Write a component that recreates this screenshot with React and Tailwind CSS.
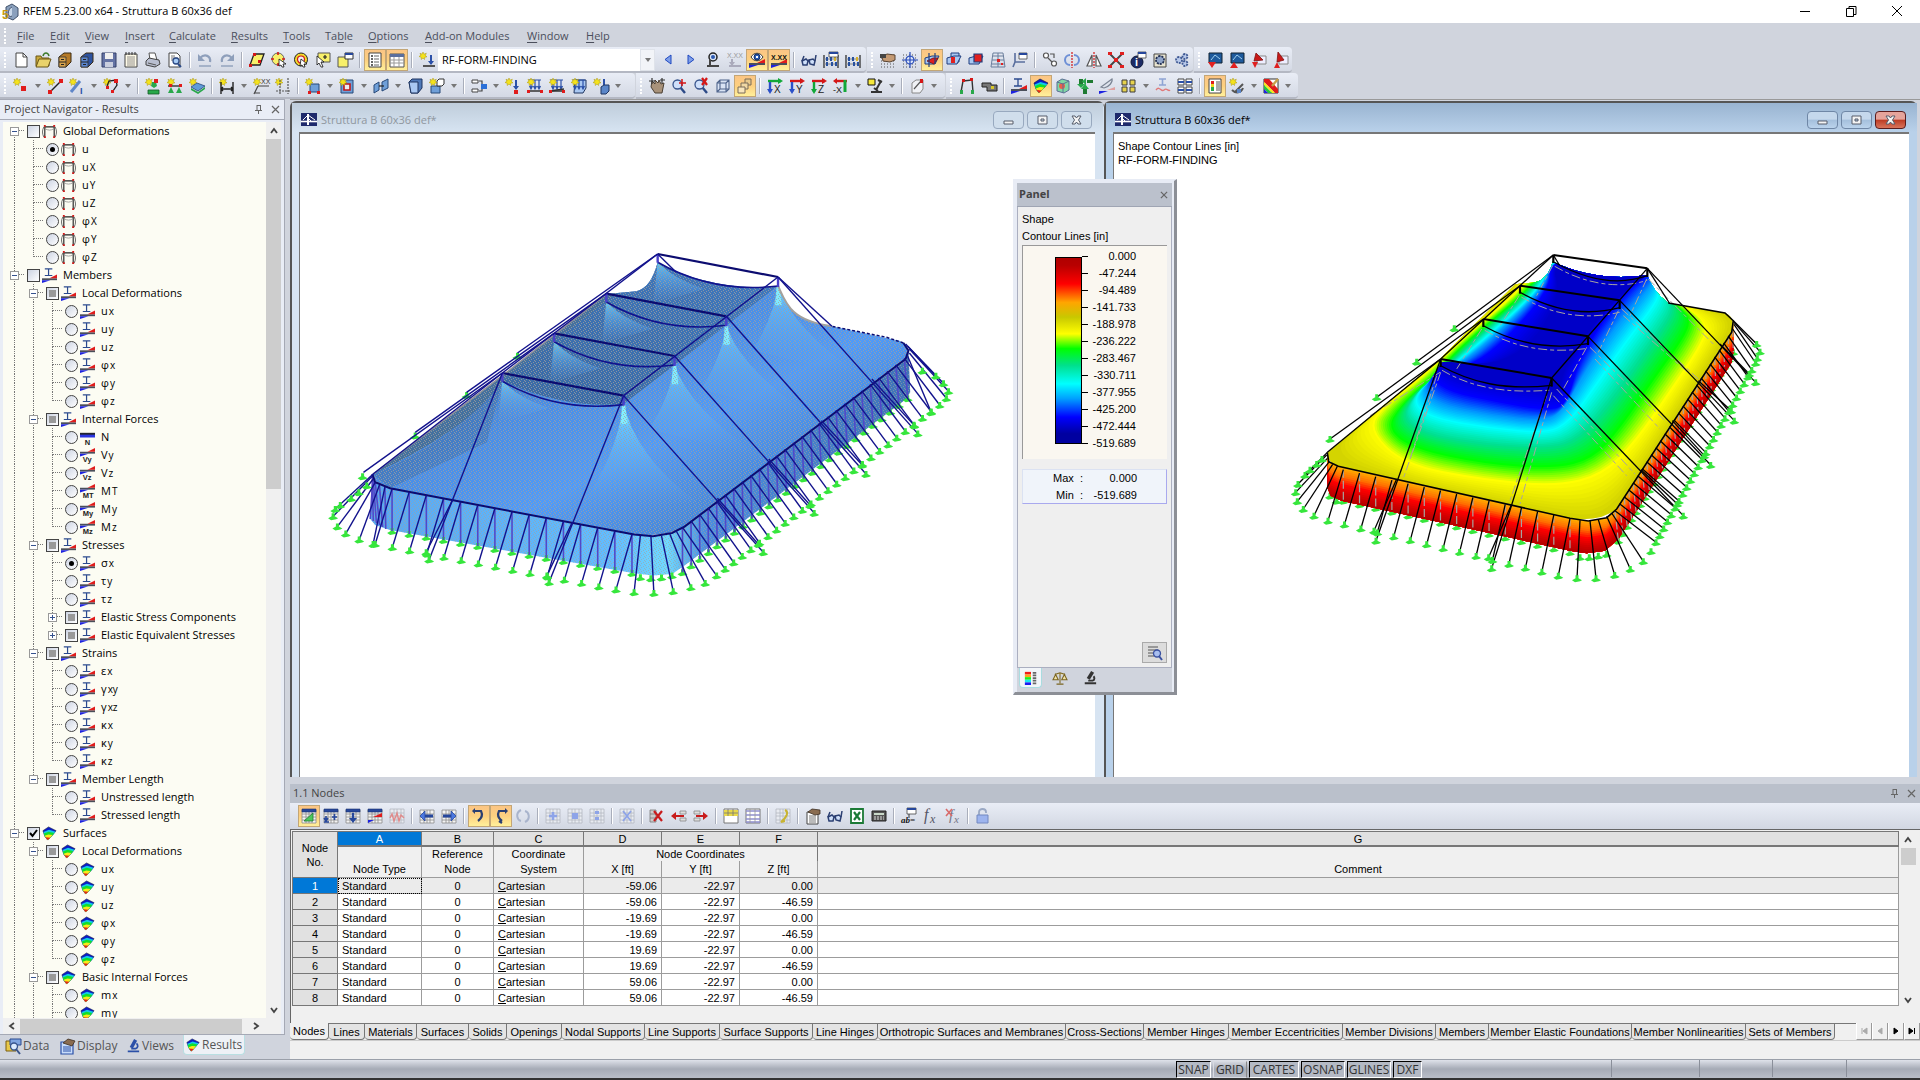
import { Fragment } from "react";

/* ---------- icons: [path, fill, stroke, stroke width] or { t, x, y, c, s } for letters ---------- */

const star = ["M4 0l1 2.2 2.3-1L6.400 3.500 8 4.800 5.800 5.200 5.500 7.500 4 6 2.200 7.500 2.200 5.200 0 4.500 1.800 3.300 1 1.200 3 2.200z", "#f4e21c", "#a89410", 0.5];
const dots = ["M1 3h14M1 6h14M1 9h14M1 12h14M1 15h14", "none", "#555", 1, "1 2"];
const grid = ["M1 2h14v13H1zM1 6h14M1 9h14M1 12h14M5 2v13M8 2v13M11 2v13", "#f4f4f4", "#8c8c8c", 0.8];
const gridHead = ["M1 1h14v3H1z", "#26479c", "#1c3370", 0.6];
const paleGrid = ["M1 1h14v14H1zM1 5h14M1 8h14M1 12h14M5 1v14M8 1v14M12 1v14", "#e8ebf1", "#b4b8c2", 0.8];
const lens = ["M9 9l5 6", "none", "#2c4a86", 2.4];
const lensGlass = ["M6.500 2a4.500 4.500 0 100 9 4.500 4.500 0 000-9z", "#cfe0fa", "#38548c", 1.3];
const beam = ["M3 1h8M3 8h8M7 1v7", "none", "#2b4a8f", 1.3];
const wedge = [["M0 11h16v2H0z", "#4a4f5a"], ["M0 13h9l-9 3z", "#1d22e0"], ["M16 11V7l-8 4z", "#e01c1c"]];
const results = [...wedge, beam];
const eye = [["M2 5c3-5 9-5 12 0-3 5-9 5-12 0z", "#fff", "#333", 1], ["M8 2a3 3 0 100 6 3 3 0 000-6z", "#2b59b0", "#132f68", 1], ["M7 4h2v2H7z", "#fff"]];
const surface = [
  ["M1 5l6-4 8 4-4 5-5 5-3-4z", "#0a1cc8", "#0c1238", 0.6],
  ["M1.500 6.500l6-2.500 7 2-3.500 4-5 5-3-4z", "#13c8e8"],
  ["M2 8l5-2 6 1.500-2 2.500-5 5-3-4z", "#12e02a"],
  ["M2.800 10.500l4-1.500 4.500.5-5 5.500z", "#f7ea1a"],
  ["M3.500 12l5.500.5-3 2.500z", "#e8231a"],
];
const cabinet = (a, b) => [["M2 5l5-4h7v9l-5 5H2z", b, "#3a2a12", 1], ["M2 5h7v10H2z", a, "#333", 0.8], ["M2 10h7M4 7.500h3M4 12.500h3", "none", "#222", 1]];
const flags = [["M1 2h5v5H1zM9 2h5v5H9zM1 9h5v5H1zM9 9h5v5H9z", "#e6d24c", "#3d3d3d", 1]];
const axis = (letter, a, b) => [["M1 3h13", "none", a, 2.4], ["M11 0l5 3-5 3z", a], ["M3 4v10", "none", b, 2.4], ["M0 11h6l-3 5z", b], { t: letter, x: 7, y: 15, c: "#222", s: 10 }];
const floorPlane = ["M1 6l7-2h7l-4 8H1z", "#a9c8f2", "#1f3d7e", 1];
const loadArrows = ["M2 2h12M4 2v8M8 2v8M12 2v8M2.500 8L4 11l1.500-3M6.500 8L8 11l1.500-3M10.500 8l1.500 3 1.500-3", "none", "#2b50a8", 1.2];
const supportBeam = [["M1 13h14", "none", "#333", 1.5], ["M0 12h3v3H0zM13 12h3v3h-3z", "#e01c1c"]];
const excel = [["M2 1h12v14H2z", "#fff", "#1b7a36", 1.8], ["M5 4l6 8M11 4l-6 8", "none", "#1b7a36", 2.2]];
const glasses = [["M1 9l4-2 2 2-1 4-4 0zM8 8l4-1 2 2-1 4-4-1z", "#cfe0fa", "#2b3f72", 1.5], ["M1 9L3 4M14 9l1-6M7 9l2-1", "none", "#2b3f72", 1.5]];
const hand = [["M2 5l5-3 8 1v5l-5 2-7-1z", "#c49a74", "#5a4432", 1], ["M0 2h6v4H0z", "#444"]];
const abacus = [["M1 3v13M15 3v13", "none", "#222", 1.2], ["M1 7h14M1 12h14", "none", "#888", 1], ["M3 5h2v4H3zM7 5h2v4H7zM3 10h2v4H3zM8 10h2v4H8zM12 10h2v4h-2z", "#27509e"], ["M11 5h2v4h-2z", "#d8b22a"]];

const icons = {
  app: [["M4 3l6-3 6 4v8l-5 4-7-3z", "#8aa0bd", "#40516b", 1], ["M10 3a3 5 20 100 9", "#c9d8ea", "#40516b", 1], { t: "5", x: 0, y: 15, c: "#c79a10", s: 12, b: 1 }],
  doc: [["M3 1h7l4 4v10H3z", "#fff", "#444", 1], ["M10 1v4h4", "none", "#444", 1]],
  open: [["M1 4h5l1 2h7v8H1z", "#c8a93c", "#6b5717", 1], ["M4 7h12l-3 8H1z", "#e9d26a", "#6b5717", 1], ["M8 4c1-4 5-4 6 0", "none", "#3c7a2a", 1.5]],
  cab1: cabinet("#d9a44c", "#b67a26"),
  cab2: cabinet("#5b86d0", "#2d53a0"),
  save: [["M1 1h14v14H1z", "#6473a4", "#35406b", 1], ["M4 1h8v6H4z", "#f0f0f0"], ["M4 10h8v5H4z", "#c9cede"]],
  notes: [["M2 2h12v13H2z", "#fffbe8", "#444", 1], ["M4 5h8M4 7h8M4 9h8M4 11h8M4 13h8", "none", "#777", 0.8], ["M3 0v3M6 0v3M9 0v3M12 0v3", "none", "#333", 1]],
  print: [["M4 1h6l2 7H5z", "#fff", "#555", 1], ["M1 9l3-3 10 2 1 4-5 3-9-2z", "#b9bfd0", "#444", 1], ["M3 11l8 2", "none", "#555", 1]],
  preview: [["M2 1h8l3 3v11H2z", "#fff", "#444", 1], ["M4 4h4M4 6h7M4 8h3", "none", "#777", 1], ["M9 6a3 3 0 100 6 3 3 0 000-6z", "#a8ccf5", "#2c4a86", 1.3], ["M11 12l3 3", "none", "#2c4a86", 2]],
  undo: [["M3 6c5-5 11-2 10 4", "none", "#8e9fbb", 2.2], ["M1 2v7h7z", "#8e9fbb"], ["M2 14h12", "none", "#8e9fbb", 1.4]],
  redo: [["M13 6C8 1 2 4 3 10", "none", "#8e9fbb", 2.2], ["M15 2v7H8z", "#8e9fbb"], ["M2 14h12", "none", "#8e9fbb", 1.4]],
  selPoly: [["M5 2h10l-4 11H1z", "#f8f06a", "#222", 1.3], ["M0 12h3v3H0zM4 1h3v3H4zM9 8h3v3H9z", "#d41717"]],
  selCircle: [["M7 1a6 6 0 100 12A6 6 0 007 1z", "#f8f06a", "#666", 1], ["M7 0v3M7 11v3M0 7h3M11 7h3", "none", "#d41717", 1.6], ["M8 7l7 5-3 0 1 3-2 0-1-2-2 1z", "#fff", "#111", 0.8]],
  selRing: [["M8 1a6.500 6.500 0 100 13A6.500 6.500 0 008 1z", "#f2da2a", "#222", 1], ["M8 4a3.500 3.500 0 100 7 3.500 3.500 0 000-7z", "#eef1f6", "#d41717", 1.2], ["M8 7l6 5-3 0 1 3-2 0-1-2-2 1z", "#fff", "#111", 0.8]],
  selMore: [["M3 1h12v9H3z", "#f8f06a", "#555", 1], ["M10 3v4M8 5h4", "none", "#222", 1.2], ["M2 4l7 6-3 0 2 5-2 0-2-4-2 2z", "#fff", "#111", 0.8]],
  selWin: [["M1 5h10v10H1z", "#f8f06a", "#555", 1], ["M8 1h8v6H8z", "#fff", "#333", 1], ["M8 1h8v2H8z", "#26479c"]],
  navTree: [["M2 1h12v14H2z", "#fff", "#444", 1], ["M4 4h2M4 7h2M4 10h2M4 13h2", "none", "#333", 1.6], ["M7 4h5M7 7h5M7 10h5M7 13h5", "none", "#666", 1]],
  navTable: [["M1 2h14v13H1z", "#fff", "#555", 1], ["M1 2h14v3H1z", "#5a6f9e"], ["M1 8h14M1 11h14M5 5v10M10 5v10", "none", "#999", 1]],
  newLoad: [star, ["M4 14h12", "none", "#555", 2], ["M12 3v9", "none", "#2b50a8", 2], ["M9 9h6l-3 4z", "#2b50a8"]],
  prev: [["M10 3v9L4 7.500z", "#7f9fe8", "#1f48c0", 1]],
  next: [["M5 3v9l6-4.500z", "#7f9fe8", "#1f48c0", 1]],
  eyeSet: [["M8 1a4 4 0 100 8 4 4 0 000-8z", "#dce6f6", "#222", 1.5], ["M8 3a2 2 0 100 4 2 2 0 000-4z", "#2b59b0"], ["M5 8v5M2 14h12", "none", "#444", 2]],
  valSet: [{ t: "X.XX", x: 0, y: 6, c: "#999", s: 7 }, ["M5 7v6M2 14h12", "none", "#aab", 2], ["M2 10h6l-3 4z", "#aab"]],
  eyeRes: [...wedge, ...eye],
  valRes: [...wedge, { t: "X.XX", x: 0, y: 8, c: "#111", s: 7, b: 1 }],
  glasses,
  abacusWin: [...abacus, ["M6 0h9v5H6z", "#fff", "#444", 0.8], ["M6 0h9v2H6z", "#26479c"]],
  abacus,
  gridHand: [dots, ...hand],
  gridSun: [dots, ["M8 4a4 4 0 100 8 4 4 0 000-8zM8 0v16M0 8h16", "#dce6fa", "#2549b8", 1.2]],
  planeXY: [floorPlane, ["M3 9l6-3h5l-4 6z", "#e02020", "#701010", 0.8], ["M5 1v14M11 1v11", "none", "#223f80", 1.2]],
  planeXZ: [["M5 1h8v9H5z", "#a9c8f2", "#1f3d7e", 1], floorPlane, ["M5 5h4v6H5z", "#e02020"]],
  planeYZ: [floorPlane, ["M6 2h8v8H6z", "#e02020", "#1f3d7e", 1.2]],
  mesh: [["M3 1h10l2 14H1zM2 8h12M8 1v14M2 12h13M3 4h11", "none", "#6b7f9c", 1], ["M7 7h3v3H7zM11 11h2v2h-2z", "#e02020"]],
  axes: [["M3 1v9h10M3 10l-2 5", "none", "#5a6f9e", 1.6], ["M7 1h8v6H7z", "#fff", "#444", 0.8], ["M7 1h8v2H7z", "#26479c"]],
  move: [["M4 1a2.500 2.500 0 100 5 2.500 2.500 0 000-5zM12 9a2.500 2.500 0 100 5 2.500 2.500 0 000-5z", "#fff", "#555", 1.2], ["M6 6l4 4M8 2h4v4", "none", "#555", 1.2]],
  rotate: [["M6 3a5 5 0 000 10M10 3a5 5 0 010 10", "none", "#6d8fd6", 2], ["M8 0v16", "none", "#d41717", 1.2, "2 1"]],
  mirror: [["M6 3v11H1zM10 3v11h5z", "#fff", "#555", 1.2], ["M8 0v16", "none", "#d41717", 1.2, "2 1"]],
  scaleX: [["M2 2l12 12M14 2L2 14", "none", "#444", 1.8], ["M0 0h4v3H0zM12 0h4v3h-4zM0 13h4v3H0zM12 13h4v3h-4zM6 6h4v4H6z", "#e02020"]],
  info: [["M7 4a6 6 0 100 12A6 6 0 007 4z", "#1d2c66", "#0c1638", 1], { t: "i", x: 5, y: 14, c: "#fff", s: 11, b: 1 }, ["M8 0h8v6H8z", "#fff", "#444", 0.8], ["M8 0h8v2H8z", "#26479c"]],
  gearBox: [["M2 2h12v13H2z", "#e8e4d0", "#444", 1], ["M8 4a4 4 0 100 8 4 4 0 000-8z", "#8fa4c8", "#222f52", 1.8, "2 1"]],
  gears: [["M5 5a3 3 0 100 6 3 3 0 000-6zM11 2a2.500 2.500 0 100 5 2.500 2.500 0 000-5zM11 9a2.500 2.500 0 100 5 2.500 2.500 0 000-5z", "#b8c9ea", "#405a94", 1.8, "2 1"]],
  screenDown: [["M2 1h13v10H2z", "#1e5a9c", "#123", 1], ["M4 8l4-5 5 4", "none", "#9fd0f0", 1], ["M1 10h8l-4 6z", "#e02020"]],
  screenUp: [["M2 1h13v10H2z", "#1e5a9c", "#123", 1], ["M4 8l4-5 5 4", "none", "#9fd0f0", 1], ["M1 16h8l-4-6z", "#e02020"]],
  pdfDown: [["M6 4h9v8H6z", "#eef", "#888", 1], ["M5 1l7 7-9 1z", "#c81818", "#801010", 0.8], ["M1 10h6l-3 6z", "#e02020"]],
  pdfUp: [["M6 4h9v8H6z", "#eef", "#888", 1], ["M5 0l6 8-7 2z", "#c81818", "#801010", 0.8], ["M1 16h6l-3-6z", "#e02020"]],

  node: [star, ["M8 8h5v5H8z", "#e01c1c"]],
  line: [star, ["M3 14L14 3", "none", "#222", 1.5], ["M1 12h4v4H1zM12 1h4v4h-4z", "#e01c1c"]],
  member: [star, ["M2 14L11 3", "none", "#5f86c8", 3], { t: "I", x: 11, y: 16, c: "#2b50a8", s: 9, b: 1 }],
  arc: [star, ["M4 8l2-5 7-1 1 5-4 6", "none", "#222", 1.3], ["M11 1h4v4h-4zM3 8h3v3H3zM8 12h3v3H8z", "#e01c1c"]],
  nodeSup: [star, ["M7 4h4l1 4-3 2-3-2z", "#28a84a"], ["M3 12h11v4H3z", "#28a84a", "#145c26", 0.8], ["M9 1h4v4H9z", "#e01c1c"]],
  lineSup: [star, ["M1 8h14", "none", "#333", 1.4], ["M2 6h3v3H2zM12 6h3v3h-3z", "#e01c1c"], ["M4 9l3 6H1zM12 9l3 6H9z", "#28a84a"]],
  surfSup: [star, ["M2 9l6-4 8 3-7 5z", "#5f9bd8", "#274878", 0.8], ["M2 10l7 4 7-5v2l-7 5-7-4z", "#28a84a"]],
  dim: [star, ["M2 4v12M14 4v12M2 11h12M4 9l-2 2 2 2M12 9l2 2-2 2", "none", "#222", 1.4]],
  comment: [star, { t: "XX", x: 8, y: 6, c: "#333", s: 7 }, ["M5 8h11M5 8l-4 8M1 15h6", "none", "#444", 1.2]],
  guide: [star, ["M5 2v14M13 0v16M1 13h15", "none", "#555", 1.2, "2 1"]],
  surf: [["M5 6h9v8H5z", "#6f9fd8", "#274878", 1], ["M3 13h3v3H3zM12 13h3v3h-3z", "#e01c1c"], star],
  hole: [["M2 2h12v13H2z", "#6f9fd8", "#274878", 1], ["M5 6h6v6H5z", "#e8ecf4", "#c01818", 1.6], star],
  cut: [["M1 7l5-3v8l-5 3zM9 4l6-3v9l-6 3z", "#6f9fd8", "#274878", 1], ["M6 8h5", "none", "#222", 1.2]],
  solid: [["M2 4l3-3h10v9l-4 5H4z", "#4f79b8", "#1f3560", 1], ["M2 4h9v11H4z", "#a9c8f2", "#1f3560", 1]],
  solidSet: [["M2 8h9v7H2z", "#6f9fd8", "#274878", 1], ["M8 3l2-2h5v5l-2 2H8z", "#fff", "#333", 1], star],
  link: [["M1 2h6v3H1zM1 11h6v3H1z", "#fff", "#444", 1], ["M8 3h3v10H8", "none", "#444", 1.2], ["M10 6h6v5h-6z", "#2b70d8"]],
  load1: [star, ["M11 2v9", "none", "#2b50a8", 2], ["M8 8h6l-3 4z", "#2b50a8"], ["M9 12h4v4H9z", "#e01c1c"]],
  load2: [loadArrows, ...supportBeam, star],
  load3: [loadArrows, ["M1 13L15 11", "none", "#333", 1.5], ...supportBeam, star],
  load4: [["M4 2h11v8l-3 5H3z", "#a9c8f2", "#1f3560", 1], loadArrows, star],
  load5: [star, ["M11 1v6", "none", "#2b50a8", 2], ["M8 9l3-2h5v6l-3 3H8z", "#5b86c8", "#1f3560", 1]],
  pan: [["M3 3l3 3V2l3 3 1-3 2 4 3-1-2 10H6L2 9z", "#a8927a", "#4b4034", 1], ["M0 3h6M3 0v6M13 0v5M11 2h5", "none", "#333", 1.2]],
  zoomWin: [lens, lensGlass, ["M11 1v7M8 5h7", "none", "#d41717", 1.5]],
  zoomX: [lens, lensGlass, ["M9 0l5 7M14 0L9 7", "none", "#d41717", 2.2]],
  box: [["M2 5l3-3h9v9l-3 3H2zM2 5h9v9M11 5l3-3M5 2v9h9M5 11l-3 3", "#d9e3f4", "#4f648c", 1.1]],
  boxes: [["M8 1h6v6H8z", "#e8c98c", "#7a6d58", 1], ["M4 5h7v6H4z", "#f0d8a4", "#7a6d58", 1], ["M1 9h7v6H1z", "#f8e6bc", "#7a6d58", 1]],
  axX: axis("X", "#12a838", "#2b50c8"),
  axY: axis("Y", "#d41717", "#2b50c8"),
  axZ: axis("Z", "#d41717", "#12a838"),
  axNX: [["M2 3h12", "none", "#d41717", 2.4], ["M4 0L0 3l4 3z", "#d41717"], ["M12 2v12", "none", "#12a838", 3], { t: "-X", x: 0, y: 15, c: "#222", s: 9 }],
  workspace: [["M1 1h7v6H1z", "#f6e83c", "#111", 1], ["M14 3l-5 9M11 2l4 2M4 14h11M7 10l4 3", "none", "#333", 2]],
  measure: [["M3 5l4-3h7v9l-3 4H3z", "#f0f2f6", "#888", 1], ["M5 11L12 3", "none", "#555", 1.2], ["M11 1h3v4h-3z", "#d41717"]],
  deform: [["M2 14L4 3l9-1 1 12", "none", "#333", 1.4], ["M1 12h3v4H1zM12 12h3v4h-3z", "#28a84a"], ["M3 1h3v3H3zM11 0h3v3h-3z", "#d41717"]],
  camera: [["M1 5h9v2h6v6H6V9H1z", "#777", "#222", 1], ["M10 8h3v3h-3z", "#d8c82a"]],
  results,
  surface,
  solidRes: [["M2 4l5-3 7 2v9l-5 3-7-2z", "#7fd8a4", "#5c6f94", 1], ["M7 5a3 3 0 100 6 3 3 0 000-6z", "#e8604c"], ["M2 4l6 2v9M8 6l6-3", "none", "#5c6f94", 1]],
  reactions: [["M2 1h4v7H2zM10 2h6v3h-6zM6 10h4v6H6z", "#1f7a32"], ["M0 6h8l-4 4zM9 0v7L5 3.500zM4 11h8L8 6z", "#28a84a"]],
  section: [["M13 1c1 3-3 8-8 9l-3-1z", "#dfe4ee", "#7b8494", 1.2], ["M0 13h9l-9 3z", "#1d22e0"], ["M8 12h8v-3z", "#e0a0a0"]],
  flags,
  moment: [["M4 1h7M4 7h7M7.500 1v6", "none", "#8ea4d4", 1.6], ["M1 12c4-5 5 3 8 0s4 2 6 0", "none", "#e07a7a", 1.4]],
  values: [["M1 1h6v6H1zM9 1h6v6H9zM1 9h6v6H1zM9 9h6v6H9z", "#fff", "#444", 1], ["M1 4h6M9 4h6M1 12h6M9 12h6", "none", "#2b50a8", 2]],
  panel: [["M2 1h12v14H2z", "#fff", "#444", 1], ["M4 3h3v3H4z", "#e01c1c"], ["M4 6h3v3H4z", "#f0d41c"], ["M4 9h3v4H4z", "#28a84a"], ["M9 4h4M9 6h4M9 8h4M9 10h4M9 12h4", "none", "#555", 1]],
  colors: [star, ["M6 14L14 6M3 12c4 4 9 3 11-2", "none", "#555", 2], ["M8 11h4v4H8z", "#5b86c8"]],
  rainbow: [["M1 1h14v14H1z", "#fff", "#333", 1], ["M1 1h5l9 10v4h-3L1 4z", "#e01c1c"], ["M1 4l11 11H9L1 7z", "#f7ea1a"], ["M1 7l8 8H5l-4-4z", "#28c83a"], ["M1 11l4 4H1z", "#1d22e0"], ["M9 8l6-7", "none", "#c8a04c", 2.4]],

  tblEdit: [grid, gridHead, ["M3 13h9V5z", "#4cc95a", "#1f7a32", 0.8]],
  tblIns: [grid, gridHead, ["M3 8v4M1 10l2 3 2-3M9 9h5M11.500 6v6M1 14h5", "none", "#26479c", 1.6]],
  tblDown: [grid, gridHead, ["M8 5v6", "none", "#26479c", 2.4], ["M4 10h8l-4 5z", "#26479c"]],
  tblRes: [grid, gridHead, ["M1 12h6l-6 3z", "#1d22e0"], ["M15 5v4H6z", "#e01c1c"]],
  tblWave: [paleGrid, ["M1 10l2-4 2 7 3-8 2 8 2-6 3 3", "none", "#e08a8a", 1.4]],
  tblLeft: [grid, ["M3 8h11", "none", "#26479c", 3], ["M6 3v10L1 8z", "#4c78e0", "#26479c", 0.8]],
  tblRight: [grid, ["M2 8h11", "none", "#26479c", 3], ["M10 3v10l5-5z", "#4c78e0", "#26479c", 0.8]],
  swap1: [["M4 3h6c2 4 1 7-3 10", "none", "#2b3f72", 2.2], ["M4 0v6L1 3z", "#2b3f72"]],
  swap2: [["M12 3H6c-2 4-1 7 3 10M6 13l3 2", "none", "#2b3f72", 2.2], ["M12 0v6l3-3z", "#2b3f72"]],
  cycle: [["M6 2C0 5 2 12 6 13M10 14c6-3 4-10 0-11", "none", "#a9b4cc", 2]],
  gPlus: [paleGrid, ["M8 4v8M4 8h8", "none", "#8ea4e8", 2.6]],
  gDot: [paleGrid, ["M5 5h6v6H5z", "#8ea4e8"]],
  gCol: [paleGrid, ["M6 3h4v3H6zM6 9h4v3H6z", "#8ea4e8"]],
  gX: [paleGrid, ["M4 3l8 10M12 3L4 13", "none", "#8ea4e8", 1.8]],
  delRow: [["M1 2h6v12H1zM1 6h6M1 10h6", "#ccc", "#777", 0.8], ["M5 3l8 10M13 3L5 13", "none", "#c81c1c", 2.2]],
  rowLeft: [["M9 3h6v3H9zM9 10h6v3H9z", "#ddd", "#888", 0.8], ["M3 8h10", "none", "#c81c1c", 2], ["M5 4v8L0 8z", "#c81c1c"]],
  rowRight: [["M1 3h6v3H1zM1 10h6v3H1z", "#ddd", "#888", 0.8], ["M3 8h9", "none", "#c81c1c", 2], ["M10 4v8l5-4z", "#c81c1c"]],
  yTable: [["M1 1h14v14H1z", "#fff", "#777", 1], ["M1 2h14v6H1z", "#e9d94a"], ["M1 5h14M5 1v7M10 1v7", "none", "#777", 0.8]],
  bTable: [["M1 1h14v14H1z", "#fff", "#777", 1], ["M1 3h14M1 7h14M1 11h14M1 14h14", "none", "#8f8fd0", 1.6], ["M5 1v14M10 1v14", "none", "#999", 0.8]],
  yGrid: [paleGrid, ["M10 2c4 2 2 7-4 12l4-1", "none", "#c8b432", 2]],
  props: [["M2 4h11v12H2z", "#fff", "#444", 1], ["M4 8h7M4 10h7M4 12h7M4 14h7", "none", "#777", 1], ["M3 4l4-3 8 1v4l-5 1z", "#8a6c50", "#3c2e22", 0.8]],
  excel,
  calc: [["M1 3h14v10H1z", "#555", "#222", 1], ["M3 5h10v2H3z", "#c8d8c8"], ["M3 9h10M3 11h10", "none", "#ddd", 1, "2 1"]],
  abWin: [["M6 0h9v6H6z", "#fff", "#444", 0.8], ["M6 0h9v2H6z", "#26479c"], ["M8 6v4", "none", "#333", 1], { t: "ab=", x: 0, y: 15, c: "#111", s: 9, b: 1, i: 1 }],
  fx: [{ t: "f", x: 1, y: 12, c: "#556", s: 16, i: 1 }, { t: "x", x: 7, y: 15, c: "#556", s: 12, i: 1 }],
  fxDel: [{ t: "f", x: 4, y: 12, c: "#778", s: 15, i: 1 }, { t: "x", x: 9, y: 15, c: "#778", s: 11, i: 1 }, ["M1 1l6 7M7 1L1 8", "none", "#d86a6a", 1.6]],
  lock: [["M4 7V4c0-4 7-4 7 0v1", "none", "#9aa8c4", 1.8], ["M2 7h11v8H2z", "#9db4ee", "#7388c0", 1]],

  frame: [["M3 15V3h10v12", "none", "#222", 1.2], ["M3 5c4 2 6 2 10 0", "none", "#888", 0.8], ["M2 3c-2 4-2 7 0 11M14 3c2 4 2 7 0 11", "none", "#555", 0.9], ["M2 1h2v2H2zM12 1h2v2h-2zM2 13h2v2H2zM12 13h2v2h-2z", "#d41717"]],
  N: [["M0 3h16v3H0z", "#22252e"], ["M0 5h16v3H0z", "#2a35e0"], { t: "N", x: 5, y: 16, c: "#222", s: 8, b: 1 }],
  data: [["M1 3h10v10H1z", "#e9c94a", "#7a5f10", 1], ["M5 1h11v6H5z", "#7fa4e0", "#2b4a8f", 1], ["M9 5a3.500 3.500 0 100 7 3.500 3.500 0 000-7z", "#dcebff", "#38548c", 1.3], ["M11 11l4 5", "none", "#38548c", 2]],
  display: [["M2 4h12v12H2z", "#c8dcfa", "#2b50a8", 1.2], ["M4 9h8M4 11h8M4 13h8", "none", "#2b50a8", 1], ["M4 5l5-4 7 2-3 5z", "#8a6c50", "#3c2e22", 0.8]],
  views: [["M11 1L6 10", "none", "#2b50a8", 4], ["M2 14h13M6 11h5c3-1 3-4 1-6", "none", "#2b50a8", 2]],
  legend: [["M1 1h7v3H1z", "#f01c1c"], ["M1 4h7v3H1z", "#ffa41c"], ["M1 7h7v3H1z", "#1cf01c"], ["M1 10h7v3H1z", "#1ce8f0"], ["M1 13h7v3H1z", "#1c1cf0"], ["M10 2h4M10 5h4M10 8h4M10 11h4M10 14h4", "none", "#666", 2]],
  scales: [["M8 2v12M4 15h8M2 4l6-2 6 2M3 4l-3 6h6zM13 4l-3 6h6z", "#f2e4a8", "#7a6420", 1.2]],
  scope: [["M11 1L6 9", "none", "#333", 4], ["M2 14h13M6 11h5c3-1 2-4 1-5", "none", "#333", 2.2]],
  pageZoom: [["M1 2h10M1 5h10M1 8h6M1 11h6", "none", "#555", 1.2], ["M10 5a3.500 3.500 0 100 7 3.500 3.500 0 000-7z", "#a9bff0", "#3a51a0", 1.3], ["M12 11l3 4", "none", "#3a51a0", 2]],
  bridge: [["M0 1h16v13H0z", "#1e2a6c"], ["M0 9.500h16", "none", "#fff", 1.6], ["M7 2v11", "none", "#fff", 2], ["M7 3L2 8M7 3l7 5M7 6l3 3", "none", "#fff", 1]],
};
["Vy", "Vz", "MT", "My", "Mz"].forEach((n) => {
  icons[n] = [["M0 4h16v2H0z", "#4a4f5a"], ["M0 6h9l-9 3z", "#1d22e0"], ["M16 4V0L8 4z", "#e01c1c"], { t: n, x: 3, y: 15, c: "#222", s: 8, b: 1 }];
});

function Icon({ name, className = "size-4" }) {
  return (
    <svg viewBox="0 0 16 16" className={`${className} shrink-0 overflow-visible`} aria-hidden="true">
      {icons[name].map((s, i) =>
        Array.isArray(s) ? (
          <path key={i} d={s[0]} fill={s[1]} stroke={s[2] || "none"} strokeWidth={s[3]} strokeDasharray={s[4]} />
        ) : (
          <text key={i} x={s.x} y={s.y} fill={s.c} fontSize={s.s} fontWeight={s.b ? 700 : 400} fontStyle={s.i ? "italic" : "normal"} fontFamily={s.i ? "Liberation Serif, serif" : "Liberation Sans, sans-serif"}>
            {s.t}
          </text>
        )
      )}
    </svg>
  );
}

/* ---------- toolbars: "|" separator, "v" drop-down arrow, "*" prefix = pressed ---------- */

const mainTools = "doc open cab1 cab2 save notes print preview | undo redo | selPoly selCircle selRing selMore selWin | *navTree *navTable | newLoad";
const caseTools = "prev next eyeSet valSet *eyeRes *valRes | glasses abacusWin abacus";
const planeTools = "gridHand gridSun *planeXY planeXZ planeYZ mesh axes | move rotate mirror scaleX info gearBox gears";
const exportTools = "screenDown screenUp pdfDown pdfUp";
const modelTools = "node v line member v arc v | nodeSup lineSup surfSup | dim v comment guide | surf v hole v cut v solid solidSet v | link v load1 load2 load3 load4 load5 v";
const viewTools = "pan zoomWin zoomX box *boxes | axX axY axZ axNX v workspace v | measure v";
const resultTools = "deform camera | results *surface solidRes reactions section flags v moment values | *panel colors v rainbow v";
const tableTools = "*tblEdit tblIns tblDown tblRes tblWave | tblLeft tblRight | *swap1 *swap2 cycle | gPlus gDot gCol | gX | delRow rowLeft rowRight | yTable bTable | yGrid | props glasses excel calc | abWin fx fxDel | lock";

function Tools({ items }) {
  return items.split(" ").map((it, i) => {
    if (it === "|") return <span key={i} className="mx-[3px] h-4 w-0.5 shrink-0 border-l border-[#a9aebb] bg-white" />;
    if (it === "v")
      return (
        <button key={i} type="button" aria-label="More" className="flex h-[22px] w-3 shrink-0 items-center justify-center">
          <span className="border-x-[3px] border-t-4 border-x-transparent border-t-[#777]" />
        </button>
      );
    const on = it[0] === "*";
    const name = on ? it.slice(1) : it;
    return (
      <button
        key={i}
        type="button"
        aria-label={name}
        className={`flex h-[22px] w-[22px] shrink-0 items-center justify-center border ${on ? "border-[#c3a676] bg-linear-to-b from-[#fbc585] via-[#fdd080] to-[#fff09a]" : "border-transparent"}`}
      >
        <Icon name={name} />
      </button>
    );
  });
}

function Bar({ className, children }) {
  return (
    <div className={`flex h-[26px] items-center rounded-r-sm border-b-2 border-[#b4b8c3] bg-linear-to-b from-[#e9edf6] to-[#d4d9e4] pt-0.5 ${className}`}>
      <span className="mx-1 h-4 w-0 shrink-0 border-l-2 border-dotted border-white" />
      {children}
    </div>
  );
}

/* ---------- navigator tree: [level, kind, icon, label, subscript] ---------- */

const radios = (lvl, icon, list, on) => list.map((l) => [lvl, l === on ? "radioOn" : "radio", icon, ...l.split("_")]);
const tree = [
  [0, "box", "frame", "Global Deformations"],
  ...radios(1, "frame", ["u", "u_X", "u_Y", "u_Z", "φ_X", "φ_Y", "φ_Z"], "u"),
  [0, "box", "results", "Members"],
  [1, "mixed", "results", "Local Deformations"],
  ...radios(2, "results", ["u_x", "u_y", "u_z", "φ_x", "φ_y", "φ_z"]),
  [1, "mixed", "results", "Internal Forces"],
  [2, "radio", "N", "N"],
  [2, "radio", "Vy", "V", "y"],
  [2, "radio", "Vz", "V", "z"],
  [2, "radio", "MT", "M", "T"],
  [2, "radio", "My", "M", "y"],
  [2, "radio", "Mz", "M", "z"],
  [1, "mixed", "results", "Stresses"],
  ...radios(2, "results", ["σ_x", "τ_y", "τ_z"], "σ_x"),
  [2, "closed", "results", "Elastic Stress Components"],
  [2, "closed", "results", "Elastic Equivalent Stresses"],
  [1, "mixed", "results", "Strains"],
  ...radios(2, "results", ["ε_x", "γ_xy", "γ_xz", "κ_x", "κ_y", "κ_z"]),
  [1, "mixed", "results", "Member Length"],
  ...radios(2, "results", ["Unstressed length", "Stressed length"]),
  [0, "checked", "surface", "Surfaces"],
  [1, "mixed", "surface", "Local Deformations"],
  ...radios(2, "surface", ["u_x", "u_y", "u_z", "φ_x", "φ_y", "φ_z"]),
  [1, "mixed", "surface", "Basic Internal Forces"],
  ...radios(2, "surface", ["m_x", "m_y"]),
];

// does the guide line of `level` carry on below row i?
const goesOn = (i, level) => {
  for (let k = i + 1; k < tree.length; k++) {
    if (tree[k][0] < level) return false;
    if (tree[k][0] === level) return true;
  }
  return level < 3;
};

function TreeRow({ index }) {
  const [level, kind, icon, label, sub] = tree[index];
  const isRadio = kind.startsWith("radio");
  return (
    <li className="flex h-[18px] items-center">
      {Array.from({ length: level + 1 }, (_, d) => (
        <span key={d} className="relative flex h-[18px] w-[19px] shrink-0 flex-col pl-[9px]">
          <span className={`h-[9px] ${d === level ? "border-b" : ""} ${d === level || goesOn(index, d) ? (d === 0 && index === 0 ? "" : "border-l") : ""} border-dotted border-[#777]`} />
          <span className={`h-[9px] ${goesOn(index, d) ? "border-l" : ""} border-dotted border-[#777]`} />
          {d === level && !isRadio && (
            <button type="button" aria-label={`Toggle ${label}`} className="absolute top-[5px] left-[5px] flex size-[9px] items-center justify-center border border-[#999] bg-white">
              <span className="absolute h-px w-[5px] bg-[#35528f]" />
              {kind === "closed" && <span className="absolute h-[5px] w-px bg-[#35528f]" />}
            </button>
          )}
        </span>
      ))}
      <label className="flex items-center whitespace-nowrap">
        {isRadio ? (
          <span className="relative ml-[3px] flex size-[13px] items-center justify-center">
            <input type="radio" name={`tree-${icon}-${level}`} defaultChecked={kind === "radioOn"} className="peer size-[13px] appearance-none rounded-full border border-[#444] bg-linear-to-br from-[#cdd4e3] to-white" />
            <span className="pointer-events-none absolute hidden size-[5px] rounded-full bg-black peer-checked:block" />
          </span>
        ) : (
          <span className="relative ml-[3px] flex size-[13px] items-center justify-center">
            <input type="checkbox" defaultChecked={kind === "checked"} className="peer size-[13px] appearance-none border border-[#444] bg-linear-to-br from-[#cdd4e3] to-white" />
            {(kind === "mixed" || kind === "closed") && <span className="pointer-events-none absolute size-[7px] bg-[#999]" />}
            <svg viewBox="0 0 9 9" className="pointer-events-none absolute hidden size-[9px] peer-checked:block">
              <path d="M1 4l2.500 3L8 1" fill="none" stroke="#000" strokeWidth="2" />
            </svg>
          </span>
        )}
        <Icon name={icon} className="ml-0.5 size-[15px]" />
        <span className="ml-[6px]">
          {label}
          {sub && <span className="ml-px text-[10px]">{sub}</span>}
        </span>
      </label>
    </li>
  );
}

function Chevron({ d }) {
  return (
    <svg viewBox="0 0 8 8" className="size-2">
      <path d={d} fill="none" stroke="#444" strokeWidth="1.800" />
    </svg>
  );
}
const up = "M1 6l3-4 3 4";
const down = "M1 2l3 4 3-4";
const left = "M6 1L2 4l4 3";
const right = "M2 1l4 3-4 3";

function PinClose() {
  return (
    <div className="flex items-center gap-2">
      <button type="button" aria-label="Pin">
        <svg viewBox="0 0 9 9" className="size-[9px]"><path d="M3 0v5M6.500 0v5M3 .5h3M1 5.500h7M4.500 6v3" fill="none" stroke="#666" /></svg>
      </button>
      <button type="button" aria-label="Close">
        <svg viewBox="0 0 9 9" className="size-[9px]"><path d="M1 1l7 7M8 1L1 8" fill="none" stroke="#666" strokeWidth="1.200" /></svg>
      </button>
    </div>
  );
}

function Navigator() {
  return (
    <aside className="flex w-[285px] shrink-0 flex-col">
      <div className="flex min-h-0 flex-1 flex-col border border-l-0 border-[#a5a9b5] bg-[#e9edf6]">
        <header className="flex h-5 shrink-0 items-center justify-between border-b border-[#a5a9b5] pr-1 pl-1 text-[#444]">
          <span>Project Navigator - Results</span>
          <PinClose />
        </header>
        <div className="mt-0.5 mr-[3px] ml-[3px] flex min-h-0 flex-1">
          <ul className="min-h-0 flex-1 overflow-hidden bg-[#fcfcf3] pl-0.5">
            {tree.map((_, i) => <TreeRow key={i} index={i} />)}
          </ul>
          <div className="flex w-[15px] flex-col items-center bg-[#f0f0f0]">
            <button type="button" aria-label="Scroll up" className="flex h-[17px] items-center"><Chevron d={up} /></button>
            <span className="h-[350px] w-full bg-[#cdcdcd]" />
            <button type="button" aria-label="Scroll down" className="mt-auto flex h-[17px] items-center"><Chevron d={down} /></button>
          </div>
        </div>
        <div className="mr-[3px] ml-[3px] flex h-4 shrink-0 items-center bg-[#f0f0f0]">
          <button type="button" aria-label="Scroll left" className="flex w-[17px] justify-center"><Chevron d={left} /></button>
          <span className="h-[15px] w-[222px] bg-[#cdcdcd]" />
          <button type="button" aria-label="Scroll right" className="ml-[10px]"><Chevron d={right} /></button>
        </div>
      </div>
      <nav className="flex h-6 shrink-0 items-start pl-[5px] text-[12px] leading-[22px] text-[#555]">
        <button type="button" className="flex w-[54px] items-center gap-0.5"><Icon name="data" />Data</button>
        <button type="button" className="flex w-[67px] items-center gap-0.5"><Icon name="display" />Display</button>
        <button type="button" className="flex w-[57px] items-center gap-0.5"><Icon name="views" className="size-[14px]" />Views</button>
        <button type="button" className="flex h-[20px] items-center gap-0.5 rounded-b border border-t-0 border-[#b9dfe2] bg-[#eef1f6] px-0.5"><Icon name="surface" className="size-[14px]" />Results</button>
      </nav>
    </aside>
  );
}

/* ---------- model drawing helpers ---------- */

const lerp = (a, b, t) => a + (b - a) * t;
const lerpPts = (p, q, t) => p.map(([x, y], i) => [lerp(x, q[i][0], t), lerp(y, q[i][1], t)]);
const poly = (pts, sx, sy) => pts.map(([x, y]) => `${(x * sx).toFixed(1)},${(y * sy).toFixed(1)}`).join(" ");
const mix = (a, b, t) => `rgb(${a.map((v, i) => Math.round(lerp(v, b[i], t))).join(",")})`;

// closed smooth curve through the middles of the sides
const smooth = (pts, s) => {
  const mid = (a, b) => `${(((a[0] + b[0]) / 2) * s).toFixed(1)} ${(((a[1] + b[1]) / 2) * s).toFixed(1)}`;
  const n = pts.length;
  let d = `M${mid(pts[n - 1], pts[0])}`;
  pts.forEach((p, i) => {
    d += `Q${(p[0] * s).toFixed(1)} ${(p[1] * s).toFixed(1)} ${mid(p, pts[(i + 1) % n])}`;
  });
  return d + "Z";
};

// n points spread evenly on a segment
const spread = (a, b, n) => Array.from({ length: n }, (_, i) => [lerp(a[0], b[0], i / (n - 1)), lerp(a[1], b[1], i / (n - 1))]);

function Supports({ pts, sx, sy }) {
  return pts.map(([x, y], i) => (
    <path key={i} transform={`translate(${(x * sx).toFixed(1)} ${(y * sy).toFixed(1)})`} d="M-1.500-3h3v3l3.500 2-2 1-5 1-3-2 3.500-2z" fill="#36e63c" />
  ));
}

function Lines({ list, sx, sy, color, w = 1.2, dash }) {
  return list.map(([a, b], i) => (
    <line key={i} x1={a[0] * sx} y1={a[1] * sy} x2={b[0] * sx} y2={b[1] * sy} stroke={color} strokeWidth={w} strokeDasharray={dash} />
  ));
}

const zip = (a, b) => a.map((p, i) => [p, b[i]]);

/* blue shaded membrane */
function MembraneModel() {
  const sx = 0.4209;
  const sy = 0.3333;
  const L = [[826, 75], [704, 194], [580, 313], [457, 432]];
  const R = [[1112, 144], [989, 262], [866, 381], [745, 500]];
  const S = (x, y) => `${(x * sx).toFixed(1)} ${(y * sy).toFixed(1)}`;
  const roof = `M${S(826, 100)}C${S(815, 150)} ${S(800, 180)} ${S(775, 187)}L${S(705, 195)}L${S(457, 440)}L${S(150, 735)}Q${S(150, 765)} ${S(190, 778)}L${S(770, 917)}Q${S(850, 925)} ${S(890, 893)}L${S(1415, 390)}Q${S(1430, 352)} ${S(1400, 335)}L${S(1240, 292)}C${S(1140, 275)} ${S(1130, 220)} ${S(1112, 170)}C${S(1060, 185)} ${S(920, 170)} ${S(826, 100)}Z`;
  const wallTop = [[148, 735], [155, 760], [190, 778], [770, 917], [815, 922], [860, 912], [890, 893], [1415, 390], [1422, 365]];
  const wallEnd = [[143, 870], [155, 888], [190, 903], [770, 1033], [815, 1040], [860, 1035], [890, 1010], [1415, 512], [1426, 490]];
  const wall = [...wallTop, ...[...wallEnd].reverse()];
  const frontTop = spread([195, 779], [765, 916], 15);
  const frontEnd = spread([155, 945], [727, 1082], 15);
  const frontFoot = spread([195, 906], [765, 1032], 15);
  const sideTop = spread([885, 895], [1412, 388], 27);
  const sideEnd = spread([966, 1040], [1496, 528], 27);
  const sideFoot = spread([885, 1030], [1420, 508], 27);
  const cornerTop = [[785, 919], [810, 921], [835, 920], [855, 915], [870, 906]];
  const cornerEnd = [[770, 1090], [817, 1092], [863, 1087], [905, 1075], [939, 1062]];
  const leftTop = [[150, 735], [148, 742], [150, 750], [155, 760], [165, 768], [178, 774]];
  const leftEnd = [[60, 840], [55, 862], [65, 893], [85, 914], [117, 932], [150, 945]];
  const farTop = [[1415, 345], [1420, 352], [1424, 360], [1424, 372], [1420, 382]];
  const farEnd = [[1487, 440], [1505, 463], [1517, 487], [1512, 508], [1476, 550]];
  const stays = [
    [R[3], [568, 1060]], [[623, 880], [563, 1040]], [L[3], [283, 992]], [[340, 810], [276, 970]],
    [R[3], [1077, 970]], [[968, 808], [1065, 945]], [R[2], [1198, 852]], [[1090, 690], [1188, 828]],
    [R[1], [1321, 735]], [[1215, 575], [1312, 708]], [R[0], [1444, 614]], [[1335, 450], [1436, 590]],
    [L[3], [127, 730]], [L[2], [250, 610]], [L[1], [372, 490]], [L[0], [493, 372]], [R[0], [1240, 292]], [L[0], [870, 130]], [L[3], [150, 735]],
  ];
  return (
    <svg viewBox="0 0 660 390" className="mt-[95px] ml-[10px] h-[390px] w-[660px] shrink-0">
      <defs>
        <pattern id="mesh" width="5" height="4" patternUnits="userSpaceOnUse">
          <path d="M0 0h1v1H0zM3 1h1v1H3zM1 2h1v1H1zM4 3h1v1H4z" fill="#a3a19d" />
        </pattern>
        <linearGradient id="roofFill" x1="0" y1="0" x2="1" y2="1">
          <stop offset=".22" stopColor="#406fa6" />
          <stop offset=".42" stopColor="#4a8ee6" />
          <stop offset=".6" stopColor="#519bf8" />
          <stop offset=".85" stopColor="#4280d0" />
        </linearGradient>
        <linearGradient id="wallFill" x1="0" x2="1">
          <stop offset="0" stopColor="#5aa8f0" />
          <stop offset=".45" stopColor="#62bcff" />
          <stop offset=".55" stopColor="#6fd8ff" />
          <stop offset=".62" stopColor="#4c8ee0" />
          <stop offset="1" stopColor="#3f74b8" />
        </linearGradient>
        <linearGradient id="topFill" x1="0" y1="1" x2="1" y2="0">
          <stop offset="0" stopColor="#3a6aa4" />
          <stop offset="1" stopColor="#4079c0" />
        </linearGradient>
        <linearGradient id="cone" x1="0" y1="0" x2="0" y2="1">
          <stop offset="0" stopColor="#86f4ff" />
          <stop offset=".25" stopColor="#66c4ff" stopOpacity=".9" />
          <stop offset="1" stopColor="#519bf8" stopOpacity="0" />
        </linearGradient>
        <clipPath id="roofClip"><path d={roof} /></clipPath>
      </defs>
      <polygon points={poly(wall, sx, sy)} fill="url(#wallFill)" />
      <polygon points={poly(wall, sx, sy)} fill="url(#mesh)" opacity=".6" />
      <path d={roof} fill="url(#roofFill)" />
      <g clipPath="url(#roofClip)">
        <path d={`M${S(826, 100)}L${S(1112, 170)}L${S(745, 525)}Q${S(600, 540)} ${S(457, 455)}Z`} fill="url(#topFill)" />
        <path d={`M${S(826, 100)}L${S(457, 455)}Q${S(380, 600)} ${S(150, 735)}L${S(457, 432)}L${S(705, 195)}Z`} fill="#44719f" />
        <path d={`M${S(457, 455)}Q${S(340, 640)} ${S(150, 735)}L${S(190, 778)}L${S(420, 640)}Z`} fill="#3f70ac" opacity=".5" />
        {R.slice(0, 3).map(([x, y], i) => (
          <path key={i} d={`M${S(x, y + 25)}Q${S(x + 30, y + 150)} ${S(x + 200, y + 300)}L${S(x - 60, y + 220)}Q${S(x - 10, y + 120)} ${S(x, y + 25)}`} fill="url(#cone)" opacity=".7" />
        ))}
        {L.map(([x, y], i) => <path key={i} d={`M${S(x, y + 22)}Q${S(x + 30, y + 70)} ${S(x + 110, y + 105)}L${S(x - 10, y + 150)}Z`} fill="url(#cone)" opacity=".7" />)}
        <path d={`M${S(745, 520)}Q${S(770, 680)} ${S(920, 820)}L${S(640, 840)}Q${S(730, 680)} ${S(745, 520)}`} fill="url(#cone)" />
        {R.map(([x, y], i) => <path key={i} d={`M${S(x - 4, y + 28)}L${S(x + 4, y + 28)}L${S(x + 9, y + 85)}L${S(x - 7, y + 85)}Z`} fill="#86f4ff" opacity=".8" />)}
      </g>
      <path d={roof} fill="url(#mesh)" opacity=".75" />
      <path d={`M${S(705, 195)}L${S(457, 440)}L${S(150, 735)}`} fill="none" stroke="#8f9198" strokeWidth="1.500" />
      <path d={`M${S(1112, 170)}C${S(1130, 220)} ${S(1140, 275)} ${S(1240, 292)}`} fill="none" stroke="#a3a19d" strokeWidth="2" />
      <Supports pts={[...frontFoot, ...sideFoot, [785, 1045], [810, 1048], [835, 1046], [860, 1040]]} sx={sx} sy={sy} />
      <Lines list={[...zip(frontTop, frontFoot), ...zip(sideTop, sideFoot), ...zip(leftTop, spread([143, 870], [180, 900], 6))]} sx={sx} sy={sy} color="#5148c8" w={1.6} />
      <polyline points={poly([[1410, 342], [1422, 365], [1415, 390], [890, 893], [860, 912], [815, 922], [770, 917], [190, 778], [155, 760], [148, 735]], sx, sy)} fill="none" stroke="#0c0c70" strokeWidth="2" />
      <polyline points={poly([[1410, 342], [1370, 325], [1240, 292]], sx, sy)} fill="none" stroke="#0c0c70" strokeWidth="1.500" strokeDasharray="3 2" />
      {L.map(([x, y], i) => (
        <Fragment key={i}>
          <path d={`M${S(x, y + 25)}C${S(x + 90, y + 90)} ${S(x + 190, y + 110)} ${S(R[i][0], R[i][1] + 27)}`} fill="none" stroke="#12128c" strokeWidth="1.600" />
          <Lines list={[[L[i], R[i]]]} sx={sx} sy={sy} color="#0c0c70" w={2.2} />
          <Lines list={[[L[i], [x, y + 26]], [R[i], [R[i][0], R[i][1] + 30]]]} sx={sx} sy={sy} color="#4a40c8" w={2.4} />
        </Fragment>
      ))}
      <Supports pts={[[250, 620], [372, 498], [493, 380]]} sx={sx} sy={sy} />
      <Lines list={[[L[0], L[3]], [R[0], R[3]], ...stays, ...zip(frontTop, frontEnd), ...zip(sideTop, sideEnd), ...zip(cornerTop, cornerEnd), ...zip(leftTop, leftEnd), ...zip(farTop, farEnd)]} sx={sx} sy={sy} color="#12128c" w={1.4} />
      <Supports pts={[...frontEnd, ...sideEnd, ...cornerEnd, ...leftEnd, ...farEnd, ...stays.slice(0, 12).map((s) => s[1]), [125, 742], [72, 828], [98, 808], [116, 790], [135, 770], [1455, 425]]} sx={sx} sy={sy} />
    </svg>
  );
}

/* contour plot */
const rings = [
  { c: [212, 212, 0], p: [[172, 690], [400, 760], [660, 815], [900, 868], [1010, 868], [1110, 730], [1230, 540], [1340, 370], [1400, 270], [1300, 235], [1190, 215], [980, 80], [840, 60], [735, 160], [560, 330], [400, 480], [250, 590]] },
  { c: [255, 255, 0], p: [[290, 600], [400, 710], [640, 755], [860, 775], [1000, 740], [1100, 640], [1210, 480], [1290, 360], [1320, 290], [1250, 232], [1180, 200], [980, 80], [840, 70], [765, 170], [570, 335], [450, 450], [340, 530]] },
  { c: [0, 255, 0], p: [[350, 600], [430, 660], [640, 705], [850, 720], [970, 690], [1050, 600], [1160, 440], [1240, 330], [1265, 270], [1215, 225], [1170, 190], [980, 80], [840, 80], [785, 175], [590, 335], [490, 440], [390, 530]] },
  { c: [0, 224, 144], p: [[395, 570], [470, 620], [650, 650], [840, 660], [930, 630], [1020, 530], [1110, 400], [1180, 300], [1215, 240], [1190, 205], [1160, 170], [980, 80], [840, 85], [800, 175], [605, 340], [490, 450], [430, 500]] },
  { c: [0, 255, 255], p: [[430, 530], [490, 570], [660, 600], [830, 615], [900, 580], [980, 470], [1070, 340], [1140, 250], [1170, 200], [1160, 170], [1150, 140], [980, 80], [840, 90], [815, 175], [625, 345], [500, 445], [450, 480]] },
  { c: [0, 150, 255], p: [[460, 490], [510, 530], [660, 560], [820, 580], [880, 545], [950, 420], [1040, 290], [1110, 210], [1145, 170], [1145, 145], [1140, 125], [980, 80], [840, 95], [825, 175], [650, 345], [530, 430], [480, 450]] },
  { c: [0, 0, 255], p: [[485, 450], [540, 490], [680, 520], [825, 545], [890, 530], [925, 400], [1010, 260], [1085, 175], [1130, 140], [1135, 120], [1130, 110], [980, 80], [840, 95], [840, 180], [690, 350], [580, 420], [500, 420]] },
  { c: [0, 0, 200], p: [[508, 405], [560, 440], [690, 470], [840, 480], [870, 490], [880, 420], [980, 270], [1060, 190], [1125, 145], [1130, 125], [1120, 115], [980, 100], [845, 100], [870, 190], [800, 330], [680, 410], [520, 395]] },
];

function ContourModel() {
  const s = 1 / 3;
  const k = { sx: s, sy: s };
  const L = [[850, 78], [750, 170], [640, 270], [512, 390]];
  const R = [[1132, 118], [1049, 214], [954, 322], [845, 447]];
  const S = (x, y) => `${(x * s).toFixed(1)} ${(y * s).toFixed(1)}`;
  const roof = `M${S(848, 98)}C${S(840, 135)} ${S(815, 165)} ${S(770, 162)}L${S(735, 166)}L${S(510, 390)}L${S(172, 670)}Q${S(170, 700)} ${S(205, 712)}L${S(900, 868)}Q${S(990, 880)} ${S(1040, 840)}L${S(1385, 310)}Q${S(1400, 265)} ${S(1365, 252)}L${S(1195, 222)}Q${S(1150, 190)} ${S(1132, 138)}Q${S(980, 160)} ${S(848, 98)}Z`;
  const top = [[172, 670], [176, 698], [205, 712], [900, 868], [955, 876], [1010, 866], [1040, 840], [1385, 310], [1390, 275]];
  const foot = [[172, 775], [182, 800], [215, 815], [900, 965], [950, 973], [1005, 965], [1045, 930], [1385, 400], [1390, 370]];
  const heat = [[255, 170, 0], [255, 110, 0], [255, 0, 0], [210, 0, 0], [175, 0, 0]];
  const frontTop = spread([220, 722], [900, 868], 15);
  const frontEnd = spread([174, 875], [865, 1040], 15);
  const frontFoot = spread([220, 815], [900, 970], 15);
  const sideTop = spread([1035, 845], [1388, 300], 27);
  const sideEnd = spread([1158, 940], [1457, 402], 27);
  const sideFoot = spread([1045, 935], [1390, 370], 27);
  const cornerTop = [[930, 874], [960, 875], [985, 872], [1010, 862], [1025, 852]];
  const cornerEnd = [[921, 1048], [978, 1048], [1034, 1038], [1081, 1020], [1120, 997]];
  const leftTop = [[172, 670], [170, 678], [172, 688], [178, 698], [188, 706], [202, 712]];
  const leftEnd = [[105, 738], [84, 765], [77, 790], [82, 817], [100, 840], [132, 860]];
  const farTop = [[1390, 275], [1392, 280], [1392, 286]];
  const farEnd = [[1460, 345], [1470, 368], [1462, 388]];
  const stays = [
    [R[3], [665, 1018]], [[724, 828], [656, 985]], [L[3], [318, 935]], [[380, 750], [312, 905]],
    [R[3], [1240, 860]], [[1113, 722], [1222, 825]], [R[2], [1322, 708]], [[1207, 575], [1303, 680]],
    [R[1], [1393, 575]], [[1285, 455], [1384, 545]], [R[0], [1457, 460]], [[1350, 345], [1438, 435]],
    [L[3], [180, 630]], [L[2], [320, 505]], [L[1], [440, 398]], [L[0], [553, 298]], [R[0], [1198, 222]], [L[3], [172, 670]], [L[0], [868, 108]],
  ];
  const ghosts = [
    [[512, 430], [400, 748]], [[500, 440], [420, 690]], [[830, 500], [720, 815]], [[845, 490], [750, 825]], [[860, 480], [1095, 735]], [[850, 500], [1070, 740]],
    [[960, 355], [1190, 580]], [[975, 390], [1170, 600]], [[1055, 240], [1285, 450]], [[1060, 260], [1265, 440]], [[1135, 150], [1335, 350]],
    [[510, 430], [300, 560]], [[635, 300], [560, 420]], [[950, 355], [880, 480]], [[1045, 245], [985, 370]], [[1130, 150], [1080, 260]], [[848, 110], [800, 200]], [[748, 200], [690, 290]],
  ];
  return (
    <svg viewBox="0 0 520 370" className="mt-[95px] ml-[156px] h-[370px] w-[520px] shrink-0 overflow-visible">
      <defs><clipPath id="contourClip"><path d={roof} /></clipPath></defs>
      <Supports pts={[...frontFoot, ...sideFoot, [930, 985], [958, 985], [985, 980], [1010, 975], [180, 800], [200, 815]]} {...k} />
      {Array.from({ length: 16 }, (_, i) => {
        const t = i / 16;
        const h = Math.min(3, Math.floor(t * 4));
        return <polygon key={i} points={poly([...lerpPts(top, foot, t), ...[...foot].reverse()], s, s)} fill={mix(heat[h], heat[h + 1], t * 4 - h)} />;
      })}
      <path d={roof} fill="#d4d400" />
      <g clipPath="url(#contourClip)">
        {rings.slice(1).map((ring, r) =>
          Array.from({ length: 9 }, (_, i) => {
            const t = (i + 1) / 9;
            return <path key={`${r}-${i}`} d={smooth(lerpPts(rings[r].p, ring.p, t), s)} fill={mix(rings[r].c, ring.c, t)} />;
          })
        )}
      </g>
      <Lines list={ghosts} {...k} color="#a8a4a0" w={1} dash="9 3 4 3" />
      <Lines list={[...zip(frontTop, frontFoot), ...zip(sideTop, sideFoot)]} {...k} color="#a8a4a0" w={1.2} dash="8 3" />
      <polyline points={poly([[1195, 222], [1365, 252], [1390, 275], [1385, 310], [1040, 840], [1010, 866], [955, 876], [900, 868], [205, 712], [176, 698], [172, 670]], s, s)} fill="none" stroke="#000" strokeWidth="1.600" />
      {L.map(([x, y], i) => (
        <Fragment key={i}>
          <path d={`M${S(x, y + 20)}C${S(x + 90, y + 70)} ${S(x + 190, y + 95)} ${S(R[i][0], R[i][1] + 22)}`} fill="none" stroke="#000" strokeWidth="1.300" />
          <path d={`M${S(x + 4, y + 34)}C${S(x + 90, y + 84)} ${S(x + 190, y + 105)} ${S(R[i][0], R[i][1] + 36)}`} fill="none" stroke="#a8a4a0" strokeDasharray="9 3 4 3" />
          <Lines list={[[L[i], R[i]]]} {...k} color="#000" w={2} />
          <Lines list={[[L[i], [x, y + 24]], [R[i], [R[i][0], R[i][1] + 26]]]} {...k} color="#000" w={2.2} />
        </Fragment>
      ))}
      <Lines list={[[L[0], L[3]], [R[0], R[3]], ...stays, ...zip(frontTop, frontEnd), ...zip(sideTop, sideEnd), ...zip(cornerTop, cornerEnd), ...zip(leftTop, leftEnd), ...zip(farTop, farEnd)]} {...k} color="#000" w={1.3} />
      <Supports pts={[...frontEnd, ...sideEnd, ...cornerEnd, [1143, 967], ...leftEnd, ...farEnd, ...stays.slice(0, 16).map((l) => l[1]), [120, 722], [140, 705], [156, 690]]} {...k} />
    </svg>
  );
}

/* ---------- child windows ---------- */

const winGlyphs = [
  ["Minimize", "M1 6h9v3H1z"],
  ["Maximize", "M1 1h9v8H1zM4 4h3v2H4z"],
  ["Close", "M1 1h3l1.500 2L7 1h3L7.500 5 10 9H7L5.500 7 4 9H1l2.500-4z"],
];

function ChildWindow({ active, children }) {
  return (
    <section className={`flex min-w-0 flex-1 flex-col rounded-t-md border-t-2 border-l-2 border-[#555] pl-[7px] ${active ? "bg-[#b9d1ea] pr-2" : "bg-[#d7e4f2] pr-[9px]"}`}>
      <header className={`-mr-2 -ml-[7px] flex h-[29px] shrink-0 items-center pt-[5px] pr-[11px] pl-[9px] ${active ? "bg-linear-to-b from-[#99b4d1] to-[#b9d1ea]" : "bg-linear-to-b from-[#bfcddb] to-[#d7e4f2]"}`}>
        <Icon name="bridge" />
        <h2 className={`ml-1 flex-1 ${active ? "text-black" : "text-[#8f979f]"}`}>Struttura B 60x36 def*</h2>
        <div className="flex gap-[3px]">
          {winGlyphs.map(([name, d]) => {
            const red = active && name === "Close";
            return (
              <button key={name} type="button" aria-label={name} className={`flex h-[18px] w-[31px] items-center justify-center rounded-sm border ${red ? "border-[#5a1c1c] bg-linear-to-b from-[#e5a49b] from-45% via-[#bd3a22] via-50% to-[#d8745c]" : active ? "border-[#6f87a6] bg-linear-to-b from-[#c5d8ec] from-45% via-[#a4bfdc] via-50% to-[#bbd3ec]" : "border-[#98a9bf] bg-[#d0deec]"}`}>
                <svg viewBox="0 0 11 10" className="h-[10px] w-[11px]"><path d={d} fill="#f4f4f4" stroke="#565d6b" fillRule="evenodd" /></svg>
              </button>
            );
          })}
        </div>
      </header>
      <div className="min-h-0 flex-1 overflow-hidden border-t-2 border-l border-[#777] bg-white font-['Liberation_Sans',sans-serif] text-[11px] leading-[14px]">{children}</div>
    </section>
  );
}

const levels = ["0.000", "-47.244", "-94.489", "-141.733", "-188.978", "-236.222", "-283.467", "-330.711", "-377.955", "-425.200", "-472.444", "-519.689"];

function ColorPanel() {
  return (
    <section className="absolute top-[79px] left-[723px] flex h-[516px] w-[164px] flex-col border-2 border-r-[3px] border-b-[3px] border-[#e8ecf5] border-r-[#8c8f96] border-b-[#8c8f96] bg-[#e8ecf5] px-0.5 pt-0.5">
      <header className="flex h-6 shrink-0 items-center justify-between border-b border-[#9fa5b3] bg-[#bbc1cc] px-0.5 font-bold text-[#444]">
        Panel
        <button type="button" aria-label="Close panel" className="mr-0.5">
          <svg viewBox="0 0 9 9" className="size-2"><path d="M1 1l7 7M8 1L1 8" fill="none" stroke="#666" strokeWidth="1.400" /></svg>
        </button>
      </header>
      <div className="flex flex-1 flex-col border border-t-0 border-[#abafc0] bg-[#efefef] px-1 pt-1 font-['Liberation_Sans',sans-serif] text-[11px] leading-[17px]">
        <p>Shape</p>
        <p>Contour Lines [in]</p>
        <div className="flex h-[214px] border-t border-l border-[#999] bg-[#faf7f0] pt-[3px] pl-8">
          <div className="mt-2 h-[187px] w-[27px] border border-black bg-[linear-gradient(#b00000,#b80000_4%,#f00_14%,#ffa500_24%,#c8c800_32%,#ff0_41%,#0f0_49%,#00e08c_58%,#0ff_68%,#00a0ff_76%,#00f_86%,#0000a0_95%)]" />
          <div className="-mt-px">
            {levels.map((v) => (
              <div key={v} className="flex h-[17px] items-center">
                <span className="h-px w-[6px] bg-black" />
                <span className="w-[48px] text-right">{v}</span>
              </div>
            ))}
          </div>
        </div>
        <dl className="mt-[10px] mr-0.5 grid h-[35px] w-full grid-cols-[60px_54px] border border-[#dbe2f2] border-r-[#a9a9ee] border-b-[#a9a9ee] bg-[#f0f4fa] text-right">
          <dt>Max &nbsp;:</dt><dd>0.000</dd>
          <dt>Min &nbsp;:</dt><dd>-519.689</dd>
        </dl>
        <button type="button" aria-label="Details" className="mt-auto mb-[4px] flex h-[21px] w-[25px] items-center justify-center self-end border border-[#aaa] bg-[#dcdcdc]"><Icon name="pageZoom" /></button>
      </div>
      <nav className="flex h-6 shrink-0 bg-[#d0d4dd] pl-0.5">
        <button type="button" aria-label="Color scale" className="mb-1 flex w-[23px] items-center justify-center rounded-b border border-t-0 border-[#a9dce0] bg-[#f2f5f9]"><Icon name="legend" className="size-[14px]" /></button>
        <button type="button" aria-label="Factors" className="mb-1 ml-0.5 flex w-[32px] items-center justify-center"><Icon name="scales" className="size-[14px]" /></button>
        <button type="button" aria-label="Filter" className="mb-1 flex w-[28px] items-center justify-center"><Icon name="scope" className="size-[14px]" /></button>
      </nav>
    </section>
  );
}

/* ---------- nodes table ---------- */

const nodes = [
  ["-59.06", "0.00"], ["-59.06", "-46.59"], ["-19.69", "0.00"], ["-19.69", "-46.59"],
  ["19.69", "0.00"], ["19.69", "-46.59"], ["59.06", "0.00"], ["59.06", "-46.59"],
];

const sheets = [
  ["Nodes", "w-[39px]"], ["Lines", "w-[36px]"], ["Materials", "w-[52px]"], ["Surfaces", "w-[52px]"], ["Solids", "w-[38px]"], ["Openings", "w-[55px]"],
  ["Nodal Supports", "w-[83px]"], ["Line Supports", "w-[75px]"], ["Surface Supports", "w-[93px]"], ["Line Hinges", "w-[65px]"],
  ["Orthotropic Surfaces and Membranes", "w-[188px]"], ["Cross-Sections", "w-[78px]"], ["Member Hinges", "w-[85px]"], ["Member Eccentricities", "w-[114px]"],
  ["Member Divisions", "w-[93px]"], ["Members", "w-[53px]"], ["Member Elastic Foundations", "w-[143px]"], ["Member Nonlinearities", "w-[114px]"], ["Sets of Members", "w-[89px]"],
];

const letter = "h-[15px] border-r border-b-2 border-[#777] bg-[#e1e1e1] font-normal leading-[12px]";
const cell = "border-r border-b border-[#9c9c9c] px-1";

function NodesPanel() {
  return (
    <section className="mt-[7px] flex shrink-0 flex-col bg-[#f0f0f0]">
      <header className="flex h-[19px] items-center justify-between bg-[#bac0cb] pr-1 pl-[3px] text-[#444]">
        <h2>1.1 Nodes</h2>
        <PinClose />
      </header>
      <div className="flex h-[26px] items-center bg-linear-to-b from-[#e9edf6] to-[#d2d7e2] pl-2"><Tools items={tableTools} /></div>
      <div className="flex h-[194px] items-start border-t border-l border-[#666] pt-px pl-px font-['Liberation_Sans',sans-serif] text-[11px]">
        <table className="w-full table-fixed border-separate border-spacing-0 border-t border-l border-[#777] leading-[14px]">
          <colgroup>
            <col className="w-[45px]" /><col className="w-[84px]" /><col className="w-[72px]" /><col className="w-[90px]" />
            <col className="w-[78px]" /><col className="w-[78px]" /><col className="w-[78px]" /><col />
          </colgroup>
          <thead>
            <tr>
              <th rowSpan={3} className="border-r border-b border-[#777] bg-[#e1e1e1] align-middle font-normal">Node<br />No.</th>
              <th className="h-[15px] border-r border-b-2 border-[#777] bg-[#0078d7] leading-[12px] font-normal text-white">A</th>
              {["B", "C", "D", "E", "F", "G"].map((c) => <th key={c} className={letter}>{c}</th>)}
            </tr>
            <tr className="h-[14px]">
              <th className="border-r border-[#9c9c9c]" />
              <th className="border-r border-[#9c9c9c] font-normal">Reference</th>
              <th className="border-r border-[#9c9c9c] font-normal">Coordinate</th>
              <th colSpan={3} className="border-r border-[#777] font-normal">Node Coordinates</th>
              <th className="border-r border-[#9c9c9c]" />
            </tr>
            <tr className="h-[17px]">
              {["Node Type", "Node", "System", "X [ft]", "Y [ft]", "Z [ft]", "Comment"].map((c) => <th key={c} className="border-r border-b border-[#9c9c9c] font-normal">{c}</th>)}
            </tr>
          </thead>
          <tbody>
            {nodes.map(([x, z], i) => (
              <tr key={i} className={`h-4 ${i === 0 ? "bg-[#ebebeb]" : "bg-white"}`}>
                <th className={`border-r border-b border-[#777] font-normal ${i === 0 ? "bg-[#0078d7] text-white" : "bg-[#e1e1e1]"}`}>{i + 1}</th>
                <td className={`${cell} ${i === 0 ? "outline-1 -outline-offset-1 outline-dotted outline-black" : ""}`}>Standard</td>
                <td className={`${cell} text-center`}>0</td>
                <td className={cell}><u>C</u>artesian</td>
                <td className={`${cell} text-right`}>{x}</td>
                <td className={`${cell} text-right`}>-22.97</td>
                <td className={`${cell} text-right`}>{z}</td>
                <td className={cell} />
              </tr>
            ))}
          </tbody>
        </table>
        <div className="mr-1 ml-px flex h-[176px] w-4 shrink-0 flex-col items-center">
          <button type="button" aria-label="Scroll up" className="flex h-[17px] items-center"><Chevron d={up} /></button>
          <span className="h-[17px] w-[15px] bg-[#cdcdcd]" />
          <button type="button" aria-label="Scroll down" className="mt-auto flex h-[15px] items-center"><Chevron d={down} /></button>
        </div>
      </div>
      <div className="flex h-[18px] items-start border-b border-[#ccc] font-['Liberation_Sans',sans-serif] text-[11px]">
        {sheets.map(([name, w], i) => (
          <button key={name} type="button" className={`${w} h-[17px] shrink-0 rounded-b border-r border-b border-[#777] whitespace-nowrap ${i === 0 ? "" : "border-t bg-[#e4e4e4]"}`}>{name}</button>
        ))}
        <span className="h-px flex-1 bg-[#777]" />
        {["M7 1v6L3 4zM2 1v6", "M6 1v6L2 4z", "M2 1v6l4-3z", "M1 1v6l4-3zM6.500 1v6"].map((d, i) => (
          <button key={d} type="button" aria-label={`Sheets ${i + 1}`} className="flex h-[17px] w-4 items-center justify-center border-r border-b border-l border-[#999] border-l-white">
            <svg viewBox="0 0 8 8" className="size-2"><path d={d} fill={i < 2 ? "#aaa" : "#000"} stroke={i < 2 ? "#aaa" : "#000"} /></svg>
          </button>
        ))}
      </div>
      <div className="h-[18px]" />
    </section>
  );
}

/* ---------- app ---------- */

const menu = [
  ["File", "w-[33px]"], ["Edit", "w-[35px]"], ["View", "w-[40px]"], ["Insert", "w-[44px]"], ["Calculate", "w-[62px]"], ["Results", "w-[52px]"], ["Tools", "w-[42px]"],
  ["Ta_ble", "w-[43px]"], ["Options", "w-[57px]"], ["Add-on Modules", "w-[102px]"], ["Window", "w-[59px]"], ["Help", "w-[40px]"],
];

const modes = [["SNAP", "w-[35px]"], ["GRID", "w-[34px]"], ["CARTES", "w-[50px]"], ["OSNAP", "w-[44px]"], ["GLINES", "w-[44px]"], ["DXF", "w-[29px]"]];

export default function App() {
  return (
    <div className="flex h-screen flex-col overflow-hidden bg-[#d0d4dd] font-['Open_Sans','Noto_Sans',sans-serif] text-[11px] text-black">
      <header className="flex h-[23px] shrink-0 items-center bg-white pl-0.5">
        <Icon name="app" />
        <h1 className="ml-[5px] flex-1">RFEM 5.23.00 x64 - Struttura B 60x36 def</h1>
        <div className="flex">
          {[["Minimize", "M0 5.500h10"], ["Restore", "M.5 2.500h7v8h-7zM3 2.500v-2h7v8H7.500"], ["Close", "M0 0l10 10M10 0L0 10"]].map(([n, d]) => (
            <button key={n} type="button" aria-label={n} className="flex h-[23px] w-[46px] items-center justify-center">
              <svg viewBox="0 0 11 11" className="size-[11px] overflow-visible"><path d={d} fill="none" stroke="#000" /></svg>
            </button>
          ))}
        </div>
      </header>
      <nav className="flex h-6 shrink-0 items-center pt-0.5 text-[#4b4f5c]">
        <span className="mr-[11px] ml-1 h-4 border-l-2 border-dotted border-white" />
        {menu.map(([m, w]) => {
          const k = m.indexOf("_");
          const name = m.replace("_", "");
          const at = k < 0 ? 0 : k;
          return (
            <button key={m} type="button" className={`${w} shrink-0 text-left whitespace-nowrap`}>
              {name.slice(0, at)}<u className="underline-offset-2">{name[at]}</u>{name.slice(at + 1)}
            </button>
          );
        })}
      </nav>
      <div className="flex h-[26px] shrink-0 gap-px">
        <Bar className="w-[866px] shrink-0">
          <Tools items={mainTools} />
          <select aria-label="Load case" defaultValue="RF-FORM-FINDING" className="h-[22px] w-[202px] shrink-0 appearance-none bg-white pl-1">
            <option>RF-FORM-FINDING</option>
          </select>
          <span className="mr-[3px] flex h-[22px] w-[15px] shrink-0 items-center justify-center border border-[#dfe3ea] bg-[#f2f4f8]"><span className="border-x-[3px] border-t-4 border-x-transparent border-t-[#777]" /></span>
          <Tools items={caseTools} />
        </Bar>
        <Bar className="w-[326px] shrink-0"><Tools items={planeTools} /></Bar>
        <Bar className="w-[98px] shrink-0"><Tools items={exportTools} /></Bar>
      </div>
      <div className="flex h-[26px] shrink-0 gap-px">
        <Bar className="w-[635px] shrink-0"><Tools items={modelTools} /></Bar>
        <Bar className="w-[309px] shrink-0"><Tools items={viewTools} /></Bar>
        <Bar className="w-[352px] shrink-0"><Tools items={resultTools} /></Bar>
      </div>
      <main className="flex min-h-0 flex-1">
        <Navigator />
        <div className="ml-[5px] flex min-w-0 flex-1 flex-col">
          <div className="relative flex min-h-0 flex-1 border-t border-[#999] pt-px pr-[3px]">
            <ChildWindow>
              <MembraneModel />
            </ChildWindow>
            <ChildWindow active>
              <div className="-mb-7 h-7 pt-[5px] pl-1"><p>Shape Contour Lines [in]</p><p>RF-FORM-FINDING</p></div>
              <ContourModel />
            </ChildWindow>
            <ColorPanel />
          </div>
          <NodesPanel />
        </div>
      </main>
      <footer className="flex h-[21px] shrink-0 items-start border-t border-b-2 border-t-[#9a9fa9] border-b-[#333] bg-linear-to-b from-[#dfe2ea] via-[#a6abb6] to-[#b9bec8]">
        <div className="flex flex-1 justify-end gap-0.5 pt-px text-[12px] leading-4 text-[#333]">
          {modes.map(([m, w]) => (
            <button key={m} type="button" className={`${w} h-[17px] border text-center ${m === "GRID" ? "border-[#d8dbe2] border-r-[#888]" : "border-black border-r-white border-b-white bg-[#b4b9c4]"}`}>{m}</button>
          ))}
        </div>
        <div className="mr-[73px] ml-[189px] flex h-[17px] w-[236px] justify-between border-x border-[#8a8f9a]">
          <span className="ml-[87px] border-l border-[#8a8f9a]" />
          <span className="mr-[73px] border-l border-[#8a8f9a]" />
        </div>
      </footer>
    </div>
  );
}
